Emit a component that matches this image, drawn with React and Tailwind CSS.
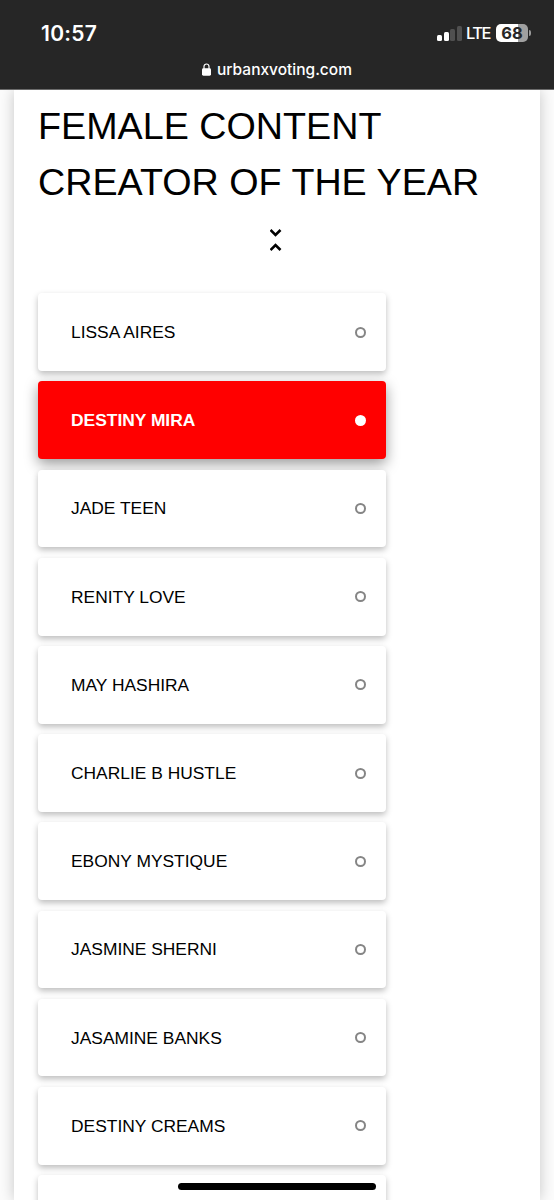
import React, { useState } from "react";

const nominees = [
  "LISSA AIRES",
  "DESTINY MIRA",
  "JADE TEEN",
  "RENITY LOVE",
  "MAY HASHIRA",
  "CHARLIE B HUSTLE",
  "EBONY MYSTIQUE",
  "JASMINE SHERNI",
  "JASAMINE BANKS",
  "DESTINY CREAMS",
];

const StatusBar = () => {
  return (
    <header className="relative z-10 h-[90px] shrink-0 bg-[#262626] text-white font-['Inter',sans-serif] border-b border-[#6b6b6b]">
      <div className="flex items-center justify-between h-[66px] pl-[41px] pr-[23px]">
        <span className="pt-[2px] text-[21px] font-semibold tracking-[0.3px]">10:57</span>
        <div className="flex items-center">
          {/* Signal bars */}
          <div className="flex items-end gap-[1.7px] h-[16px]">
            <div className="w-[5px] h-[6px] rounded-[1.5px] bg-white"></div>
            <div className="w-[5px] h-[9px] rounded-[1.5px] bg-white"></div>
            <div className="w-[5px] h-[12px] rounded-[1.5px] bg-[#505050]"></div>
            <div className="w-[5px] h-[15px] rounded-[1.5px] bg-[#505050]"></div>
          </div>
          <span className="w-[24px] ml-[4px] pt-[1px] text-[16.5px] font-medium tracking-[-1.5px]">LTE</span>
          {/* Battery */}
          <div className="ml-[6px] w-[32px] h-[18px] rounded-[5px] bg-linear-to-r from-white from-68% to-[#a0a0a0] to-68% text-[#262626] text-[16.5px] leading-[18px] font-bold flex items-center justify-center">
            68
          </div>
          <div className="ml-[1px] w-[2px] h-[6px] rounded-r-full bg-[#9a9a9a]"></div>
        </div>
      </div>
      <div className="flex items-center justify-center h-[6px] gap-[6px]">
        <svg width="9" height="13" viewBox="0 0 9 13" fill="none">
          <path d="M2 6V3.5a2.5 2.5 0 0 1 5 0V6" stroke="white" strokeWidth="1.2" />
          <rect x="0" y="5.3" width="9" height="7.4" rx="1.4" fill="white" />
        </svg>
        <span className="text-[15.5px] font-medium leading-[17px]">urbanxvoting.com</span>
      </div>
    </header>
  );
};

const NomineeCard = ({ name, selected, onSelect }) => {
  return (
    <button
      onClick={onSelect}
      className={
        selected
          ? "flex items-center justify-between w-full h-[77.7px] shrink-0 pl-[33px] pr-[20px] rounded-[4px] bg-[#ff0000] text-white font-bold text-[17.4px] shadow-[0_5px_14px_rgba(0,0,0,0.4)]"
          : "flex items-center justify-between w-full h-[77.7px] shrink-0 pl-[33px] pr-[20px] rounded-[4px] bg-white text-black text-[17.4px] shadow-[0_3px_6px_rgba(0,0,0,0.26)]"
      }
    >
      <span>{name}</span>
      <span
        className={
          selected
            ? "w-[11px] h-[11px] rounded-full bg-white"
            : "w-[11px] h-[11px] rounded-full border-2 border-[#858585]"
        }
      ></span>
    </button>
  );
};

const App = () => {
  const [choice, setChoice] = useState("DESTINY MIRA");

  return (
    <div className="relative flex flex-col w-[554px] h-[1200px] overflow-hidden bg-[#fcfcfc] font-['Liberation_Sans',Arial,sans-serif]">
      <StatusBar />

      <main className="flex-1 min-h-0 ml-[14px] mr-[14px] pl-[24px] bg-white shadow-[0_0_14px_rgba(0,0,0,0.22)]">
        <h1 className="pt-[8px] text-[37.7px] leading-[56px] text-black">
          FEMALE CONTENT
          <br />
          CREATOR OF THE YEAR
        </h1>

        <div className="flex justify-center w-[475px] mt-[19px]">
          <svg width="12" height="22" viewBox="0 0 12 22" fill="none" stroke="black" strokeWidth="2.6">
            <path d="M0.5 1L5.5 6L10.5 1" />
            <path d="M0.5 21L5.5 16L10.5 21" />
          </svg>
        </div>

        <div className="flex flex-col gap-[10.5px] w-[348px] mt-[42.3px]">
          {nominees.map((name) => (
            <NomineeCard
              key={name}
              name={name}
              selected={choice === name}
              onSelect={() => setChoice(name)}
            />
          ))}
          <div className="h-[78px] rounded-[4px] bg-white shadow-[0_3px_6px_rgba(0,0,0,0.26)]"></div>
        </div>
      </main>

      {/* Home indicator */}
      <div className="absolute left-[178px] top-[1182.5px] w-[198px] h-[7px] rounded-full bg-black"></div>
    </div>
  );
};

export default App;
